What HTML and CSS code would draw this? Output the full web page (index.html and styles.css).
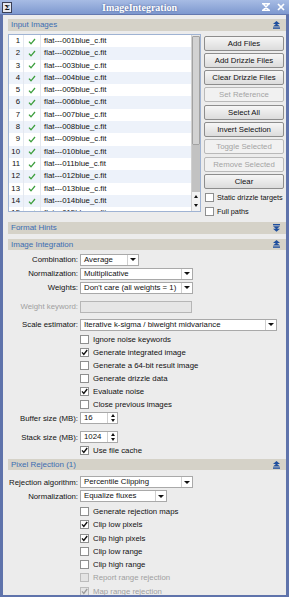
FILE: index.html
```html
<!DOCTYPE html>
<html lang="en">
<head>
    <meta charset="UTF-8">
    <title>ImageIntegration</title>
    <link rel="stylesheet" href="styles.css">
</head>
<body>
<div class="window">
    <!-- Title Bar -->
    <div class="titlebar">
        <span class="sigma">&Sigma;</span>
        <span class="title">ImageIntegration</span>
        <svg class="tb-icon" width="8" height="8" viewBox="0 0 8 8"><path d="M0 0.7H8M0 7.3H8M1.5 1.2L6.5 6.8M6.5 1.2L1.5 6.8" stroke="#fff" stroke-width="1.4" fill="none"/></svg>
        <svg class="tb-icon close" width="8" height="8" viewBox="0 0 8 8"><path d="M1 1L7 7M7 1L1 7" stroke="#fff" stroke-width="1.7" fill="none"/></svg>
    </div>

    <div class="content">
        <!-- Input Images -->
        <div class="section-head">Input Images
            <svg class="fold" width="7" height="8" viewBox="0 0 7 8"><path d="M3.5 0L7 3H0ZM3.5 2.6L7 5.6H0Z" fill="#1f4f9e"/><rect x="0" y="6.4" width="7" height="1.4" fill="#1f4f9e"/></svg>
        </div>
        <div class="input-body">
            <div class="file-list">
                <div class="rows">
                    <div class="file-row"><span class="num">1</span><span class="ok"><svg width="8" height="7" viewBox="0 0 8 7"><path d="M1 3.6L3 5.8L7 1" stroke="#3c9e3c" stroke-width="1.3" fill="none"/></svg></span><span class="name">flat---001blue_c.fit</span></div>
                    <div class="file-row"><span class="num">2</span><span class="ok"><svg width="8" height="7" viewBox="0 0 8 7"><path d="M1 3.6L3 5.8L7 1" stroke="#3c9e3c" stroke-width="1.3" fill="none"/></svg></span><span class="name">flat---002blue_c.fit</span></div>
                    <div class="file-row"><span class="num">3</span><span class="ok"><svg width="8" height="7" viewBox="0 0 8 7"><path d="M1 3.6L3 5.8L7 1" stroke="#3c9e3c" stroke-width="1.3" fill="none"/></svg></span><span class="name">flat---003blue_c.fit</span></div>
                    <div class="file-row"><span class="num">4</span><span class="ok"><svg width="8" height="7" viewBox="0 0 8 7"><path d="M1 3.6L3 5.8L7 1" stroke="#3c9e3c" stroke-width="1.3" fill="none"/></svg></span><span class="name">flat---004blue_c.fit</span></div>
                    <div class="file-row"><span class="num">5</span><span class="ok"><svg width="8" height="7" viewBox="0 0 8 7"><path d="M1 3.6L3 5.8L7 1" stroke="#3c9e3c" stroke-width="1.3" fill="none"/></svg></span><span class="name">flat---005blue_c.fit</span></div>
                    <div class="file-row"><span class="num">6</span><span class="ok"><svg width="8" height="7" viewBox="0 0 8 7"><path d="M1 3.6L3 5.8L7 1" stroke="#3c9e3c" stroke-width="1.3" fill="none"/></svg></span><span class="name">flat---006blue_c.fit</span></div>
                    <div class="file-row"><span class="num">7</span><span class="ok"><svg width="8" height="7" viewBox="0 0 8 7"><path d="M1 3.6L3 5.8L7 1" stroke="#3c9e3c" stroke-width="1.3" fill="none"/></svg></span><span class="name">flat---007blue_c.fit</span></div>
                    <div class="file-row"><span class="num">8</span><span class="ok"><svg width="8" height="7" viewBox="0 0 8 7"><path d="M1 3.6L3 5.8L7 1" stroke="#3c9e3c" stroke-width="1.3" fill="none"/></svg></span><span class="name">flat---008blue_c.fit</span></div>
                    <div class="file-row"><span class="num">9</span><span class="ok"><svg width="8" height="7" viewBox="0 0 8 7"><path d="M1 3.6L3 5.8L7 1" stroke="#3c9e3c" stroke-width="1.3" fill="none"/></svg></span><span class="name">flat---009blue_c.fit</span></div>
                    <div class="file-row"><span class="num">10</span><span class="ok"><svg width="8" height="7" viewBox="0 0 8 7"><path d="M1 3.6L3 5.8L7 1" stroke="#3c9e3c" stroke-width="1.3" fill="none"/></svg></span><span class="name">flat---010blue_c.fit</span></div>
                    <div class="file-row"><span class="num">11</span><span class="ok"><svg width="8" height="7" viewBox="0 0 8 7"><path d="M1 3.6L3 5.8L7 1" stroke="#3c9e3c" stroke-width="1.3" fill="none"/></svg></span><span class="name">flat---011blue_c.fit</span></div>
                    <div class="file-row"><span class="num">12</span><span class="ok"><svg width="8" height="7" viewBox="0 0 8 7"><path d="M1 3.6L3 5.8L7 1" stroke="#3c9e3c" stroke-width="1.3" fill="none"/></svg></span><span class="name">flat---012blue_c.fit</span></div>
                    <div class="file-row"><span class="num">13</span><span class="ok"><svg width="8" height="7" viewBox="0 0 8 7"><path d="M1 3.6L3 5.8L7 1" stroke="#3c9e3c" stroke-width="1.3" fill="none"/></svg></span><span class="name">flat---013blue_c.fit</span></div>
                    <div class="file-row"><span class="num">14</span><span class="ok"><svg width="8" height="7" viewBox="0 0 8 7"><path d="M1 3.6L3 5.8L7 1" stroke="#3c9e3c" stroke-width="1.3" fill="none"/></svg></span><span class="name">flat---014blue_c.fit</span></div>
                    <div class="file-row"><span class="num">15</span><span class="ok"><svg width="8" height="7" viewBox="0 0 8 7"><path d="M1 3.6L3 5.8L7 1" stroke="#3c9e3c" stroke-width="1.3" fill="none"/></svg></span><span class="name">flat---015blue_c.fit</span></div>
                </div>
                <div class="scrollbar">
                    <div class="thumb"></div>
                    <div class="track"></div>
                    <div class="arrows"><span class="tri-up"></span><span class="tri-down"></span></div>
                </div>
            </div>
            <div class="side">
                <button class="btn">Add Files</button>
                <button class="btn">Add Drizzle Files</button>
                <button class="btn">Clear Drizzle Files</button>
                <button class="btn" disabled>Set Reference</button>
                <button class="btn">Select All</button>
                <button class="btn">Invert Selection</button>
                <button class="btn" disabled>Toggle Selected</button>
                <button class="btn" disabled>Remove Selected</button>
                <button class="btn">Clear</button>
                <div class="side-check first"><span class="box"></span>Static drizzle targets</div>
                <div class="side-check"><span class="box"></span>Full paths</div>
            </div>
        </div>

        <!-- Format Hints -->
        <div class="section-head">Format Hints
            <svg class="fold" width="7" height="8" viewBox="0 0 7 8"><rect x="0" y="0" width="7" height="1.4" fill="#1f4f9e"/><path d="M0 2.2H7L3.5 5.2ZM0 4.8H7L3.5 7.8Z" fill="#1f4f9e"/></svg>
        </div>

        <!-- Image Integration -->
        <div class="section-head gap">Image Integration
            <svg class="fold" width="7" height="8" viewBox="0 0 7 8"><path d="M3.5 0L7 3H0ZM3.5 2.6L7 5.6H0Z" fill="#1f4f9e"/><rect x="0" y="6.4" width="7" height="1.4" fill="#1f4f9e"/></svg>
        </div>
        <div class="integration-body">
            <div class="frow"><span class="lbl">Combination:</span><div class="combo w-avg"><span class="val">Average</span><span class="drop"></span></div></div>
            <div class="frow"><span class="lbl">Normalization:</span><div class="combo w-mid"><span class="val">Multiplicative</span><span class="drop"></span></div></div>
            <div class="frow"><span class="lbl">Weights:</span><div class="combo w-mid"><span class="val">Don't care (all weights = 1)</span><span class="drop"></span></div></div>
            <div class="frow keyword"><span class="lbl off">Weight keyword:</span><div class="field w-key"></div></div>
            <div class="frow scale"><span class="lbl">Scale estimator:</span><div class="combo w-wide"><span class="val">Iterative k-sigma / biweight midvariance</span><span class="drop"></span></div></div>
            <div class="crow first"><span class="box"></span>Ignore noise keywords</div>
            <div class="crow"><span class="box on"><svg width="7" height="7" viewBox="0 0 7 7"><path d="M1 3.4L2.8 5.4L6.2 1" stroke="#111" stroke-width="1.4" fill="none"/></svg></span>Generate integrated image</div>
            <div class="crow"><span class="box"></span>Generate a 64-bit result image</div>
            <div class="crow"><span class="box"></span>Generate drizzle data</div>
            <div class="crow"><span class="box on"><svg width="7" height="7" viewBox="0 0 7 7"><path d="M1 3.4L2.8 5.4L6.2 1" stroke="#111" stroke-width="1.4" fill="none"/></svg></span>Evaluate noise</div>
            <div class="crow"><span class="box"></span>Close previous images</div>
            <div class="frow"><span class="lbl">Buffer size (MB):</span><div class="spin"><span class="val">16</span><span class="spin-btns"><span class="tri-up"></span><span class="tri-down"></span></span></div></div>
            <div class="frow stack"><span class="lbl">Stack size (MB):</span><div class="spin"><span class="val">1024</span><span class="spin-btns"><span class="tri-up"></span><span class="tri-down"></span></span></div></div>
            <div class="crow"><span class="box on"><svg width="7" height="7" viewBox="0 0 7 7"><path d="M1 3.4L2.8 5.4L6.2 1" stroke="#111" stroke-width="1.4" fill="none"/></svg></span>Use file cache</div>
        </div>

        <!-- Pixel Rejection (1) -->
        <div class="section-head pix">Pixel Rejection (1)
            <svg class="fold" width="7" height="8" viewBox="0 0 7 8"><path d="M3.5 0L7 3H0ZM3.5 2.6L7 5.6H0Z" fill="#1f4f9e"/><rect x="0" y="6.4" width="7" height="1.4" fill="#1f4f9e"/></svg>
        </div>
        <div class="rejection-body">
            <div class="frow"><span class="lbl">Rejection algorithm:</span><div class="combo w-mid"><span class="val">Percentile Clipping</span><span class="drop"></span></div></div>
            <div class="frow"><span class="lbl">Normalization:</span><div class="combo w-flux"><span class="val">Equalize fluxes</span><span class="drop"></span></div></div>
            <div class="crow tall first"><span class="box"></span>Generate rejection maps</div>
            <div class="crow tall"><span class="box on"><svg width="7" height="7" viewBox="0 0 7 7"><path d="M1 3.4L2.8 5.4L6.2 1" stroke="#111" stroke-width="1.4" fill="none"/></svg></span>Clip low pixels</div>
            <div class="crow tall"><span class="box on"><svg width="7" height="7" viewBox="0 0 7 7"><path d="M1 3.4L2.8 5.4L6.2 1" stroke="#111" stroke-width="1.4" fill="none"/></svg></span>Clip high pixels</div>
            <div class="crow tall"><span class="box"></span>Clip low range</div>
            <div class="crow tall"><span class="box"></span>Clip high range</div>
            <div class="crow tall off"><span class="box"></span>Report range rejection</div>
            <div class="crow tall off"><span class="box"><svg width="7" height="7" viewBox="0 0 7 7"><path d="M1 3.4L2.8 5.4L6.2 1" stroke="#9a9a9a" stroke-width="1.3" fill="none"/></svg></span>Map range rejection</div>
        </div>
    </div>
</div>
</body>
</html>
```

FILE: styles.css
```css
/* General */
* {
    box-sizing: border-box;
}

body {
    margin: 0;
    font-family: "Liberation Sans", Arial, sans-serif;
    font-size: 7.8px;
    color: #111;
    background: #ececec;
}

.window {
    width: 289px;
    height: 597px;
    overflow: hidden;
}

/* Title bar */
.titlebar {
    height: 15px;
    display: flex;
    align-items: center;
    padding: 0 4px 0 2px;
    background: linear-gradient(#a7bce4, #7e99cf);
    border-bottom: 1px solid #6479b0;
}

.sigma {
    width: 10px;
    height: 11px;
    border: 1px solid #3a3f55;
    background: #e6e8f0;
    font-family: "DejaVu Serif", serif;
    font-weight: bold;
    font-size: 8px;
    line-height: 9px;
    text-align: center;
    color: #111;
}

.title {
    flex: 1;
    text-align: center;
    padding-left: 12px;
    font-family: "Liberation Serif", serif;
    font-weight: bold;
    font-size: 10px;
    color: #fff;
    text-shadow: 0 0 2px #3e5289;
}

.tb-icon {
    margin-left: 7px;
}

/* Content frame */
.content {
    height: 582px;
    overflow: hidden;
    padding: 4px 0 0 5px;
    border: solid #5f73ab;
    border-width: 0 3px 2px 3px;
}

/* Section headers */
.section-head {
    height: 11.5px;
    display: flex;
    align-items: center;
    justify-content: space-between;
    padding: 0 6px 0 3px;
    background: #d5d2c8;
    color: #3c6db2;
    font-size: 8px;
}

.section-head.gap {
    margin-top: 5px;
}

.section-head.pix {
    margin-top: 1.5px;
}

/* Input images */
.input-body {
    display: flex;
    align-items: flex-start;
    gap: 3px;
    padding: 3px 2px 4px 0;
}

.file-list {
    width: 193px;
    height: 178px;
    display: flex;
    border: 1px solid #9fb3d3;
    background: #fff;
    overflow: hidden;
}

.rows {
    flex: 1;
    padding-top: 0.5px;
}

.file-row {
    display: flex;
    height: 12.3px;
    line-height: 12.3px;
}

.file-row:nth-child(even) {
    background: #edf2fa;
}

.file-row .num {
    width: 15px;
    padding-right: 3px;
    text-align: right;
    border-right: 1px solid #e4e8ef;
}

.file-row .ok {
    width: 17px;
    display: flex;
    align-items: center;
    justify-content: center;
    border-right: 1px solid #e4e8ef;
}

.file-row .name {
    padding-left: 3px;
}

.scrollbar {
    width: 9px;
    display: flex;
    flex-direction: column;
    border-left: 1px solid #d0d0d0;
    background: #e8e8e8;
}

.thumb {
    height: 109px;
    margin-top: 1px;
    background: #d2d2d2;
    border: 1px solid #a2a2a2;
    border-radius: 1px;
}

.track {
    flex: 1;
    background: #c2c2c2;
}

.arrows {
    height: 19px;
    display: flex;
    flex-direction: column;
    align-items: center;
    justify-content: space-around;
    background: #f2f2f2;
}

.tri-up {
    width: 0;
    height: 0;
    border-left: 2.5px solid transparent;
    border-right: 2.5px solid transparent;
    border-bottom: 3px solid #111;
}

.tri-down {
    width: 0;
    height: 0;
    border-left: 2.5px solid transparent;
    border-right: 2.5px solid transparent;
    border-top: 3px solid #111;
}

.side {
    width: 80px;
    display: flex;
    flex-direction: column;
    gap: 2.3px;
    padding-top: 2px;
}

.btn {
    height: 15px;
    width: 80px;
    padding: 0;
    font: inherit;
    color: #111;
    border: 1px solid #8d8d8d;
    border-radius: 2px;
    background: linear-gradient(#f6f6f6, #dcdcdc);
}

.btn:disabled {
    color: #a4a4a4;
    border-color: #b9b9b9;
    background: #f1f1f1;
}

.side-check {
    height: 12.5px;
    display: flex;
    align-items: center;
    padding-left: 1px;
    font-size: 7.3px;
    white-space: nowrap;
}

.side-check .box {
    margin-right: 3px;
}

.side-check.first {
    margin-top: -0.3px;
}

/* Checkboxes */
.box {
    flex-shrink: 0;
    width: 9px;
    height: 9px;
    margin-right: 4px;
    border: 1px solid #8e8f8f;
    background: #fff;
    display: flex;
    align-items: center;
    justify-content: center;
}

.crow {
    height: 13px;
    display: flex;
    align-items: center;
    padding-left: 72px;
    white-space: nowrap;
}

.crow.tall {
    height: 13.3px;
}

.crow.first {
    margin-top: 1.5px;
}

.crow.off {
    color: #a0a0a0;
}

.crow.off .box {
    border-color: #bcbcbc;
    background: #e4e4e4;
}

/* Form rows */
.integration-body {
    padding-top: 2.6px;
}

.rejection-body {
    padding-top: 5px;
}

.frow {
    height: 14px;
    display: flex;
    align-items: center;
}

.frow.keyword {
    margin-top: 5px;
}

.frow.scale {
    margin-top: 4px;
}

.frow.stack {
    margin-top: 5px;
}

.lbl {
    width: 72px;
    padding-right: 2px;
    text-align: right;
    white-space: nowrap;
}

.lbl.off {
    color: #a0a0a0;
}

.combo {
    height: 12px;
    display: flex;
    border: 1px solid #a9a9a9;
    background: #fff;
}

.combo .val {
    flex: 1;
    padding-left: 3px;
    line-height: 10px;
    white-space: nowrap;
    overflow: hidden;
}

.combo .drop {
    width: 11px;
    display: flex;
    align-items: center;
    justify-content: center;
    border-left: 1px solid #cfcfcf;
}

.combo .drop::after {
    content: "";
    border-left: 3px solid transparent;
    border-right: 3px solid transparent;
    border-top: 3.5px solid #111;
}

.w-avg { width: 59px; }
.w-mid { width: 113px; }
.w-wide { width: 197px; }
.w-flux { width: 87px; }

.field {
    height: 12px;
    border: 1px solid #b6b6b6;
    background: #e6e6e6;
}

.w-key { width: 112px; }

.spin {
    width: 38px;
    height: 12px;
    display: flex;
    border: 1px solid #a9a9a9;
    background: #fff;
}

.spin .val {
    flex: 1;
    padding-left: 3px;
    line-height: 10px;
}

.spin-btns {
    width: 10px;
    display: flex;
    flex-direction: column;
    align-items: center;
    justify-content: space-around;
    border-left: 1px solid #cfcfcf;
}
```
